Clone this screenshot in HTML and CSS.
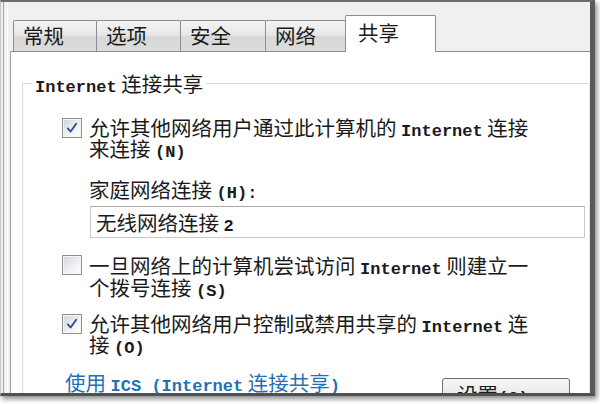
FILE: index.html
```html
<!DOCTYPE html>
<html lang="zh-CN">
<head>
<meta charset="utf-8">
<title>属性 - 共享</title>
<link rel="stylesheet" href="styles.css">
</head>
<body>
<div class="window">
  <div class="tabs">
    <div class="tab tab-general">常规</div>
    <div class="tab tab-options">选项</div>
    <div class="tab tab-security">安全</div>
    <div class="tab tab-network">网络</div>
    <div class="tab tab-share tab-active">共享</div>
  </div>
  <div class="panel">
    <fieldset class="group">
      <legend class="group-title"><span class="en">Internet</span> 连接共享</legend>
      <div class="group-body">
        <div class="option opt-allow">
          <span class="check checked"><svg viewBox="0 0 20 20" width="14" height="14"><path d="M4 10.5 L8 15 L16 4" fill="none" stroke="#34488c" stroke-width="2.6" stroke-linecap="round" stroke-linejoin="round"/></svg></span>
          <div class="option-text">允许其他网络用户通过此计算机的 <span class="en">Internet</span> 连接<br>来连接 <span class="en">(N)</span></div>
        </div>
        <div class="field-label">家庭网络连接 <span class="en">(H):</span></div>
        <div class="select">无线网络连接 <span class="en">2</span></div>
        <div class="option opt-dial">
          <span class="check"></span>
          <div class="option-text">一旦网络上的计算机尝试访问 <span class="en">Internet</span> 则建立一<br>个拨号连接 <span class="en">(S)</span></div>
        </div>
        <div class="option opt-control">
          <span class="check checked"><svg viewBox="0 0 20 20" width="14" height="14"><path d="M4 10.5 L8 15 L16 4" fill="none" stroke="#34488c" stroke-width="2.6" stroke-linecap="round" stroke-linejoin="round"/></svg></span>
          <div class="option-text">允许其他网络用户控制或禁用共享的 <span class="en">Internet</span> 连<br>接 <span class="en">(O)</span></div>
        </div>
        <div class="footer">
          <a class="ics-link" href="#">使用 <span class="en">ICS (Internet</span> 连接共享<span class="en">)</span></a>
          <button class="btn" type="button">设置<span class="en">(G)</span></button>
        </div>
      </div>
    </fieldset>
  </div>
</div>
</body>
</html>
```

FILE: styles.css
```css
html, body {
  margin: 0;
  padding: 0;
  background: #ffffff;
}

body {
  width: 600px;
  height: 404px;
  overflow: hidden;
  font-family: "Noto Sans CJK SC", "Noto Sans", sans-serif;
  font-size: 20.5px;
  color: #1a1a1a;
}

/* half-width latin runs; zero line-height keeps them from stretching the line */
.en {
  font-family: "Liberation Mono", "DejaVu Sans Mono", monospace;
  font-size: 17px;
  font-weight: 700;
  line-height: 0;
}

/* dialog frame */
.window {
  box-sizing: border-box;
  width: 595px;
  height: 396px;
  display: flex;
  flex-direction: column;
  background: #f0f0f0;
  border-top: 2px solid #6c6c6c;
  border-left: 1px solid #c4c4c4;
  border-right: 5px solid #5a5a5a;
  border-bottom: 3px solid #505050;
  padding: 13px 0 0 9px;
  overflow: hidden;
  box-shadow:
    inset 2px 0 0 #f0f0f0,
    inset 3px 0 0 #a4a4a4,
    inset 6px 0 0 #f0f0f0,
    inset 7px 0 0 #fdfdfd,
    2px 3px 5px rgba(0, 0, 0, 0.45);
}

/* tab strip */
.tabs {
  display: flex;
  align-items: flex-end;
  margin-left: 3px;
  flex: none;
}

.tab {
  box-sizing: border-box;
  height: 31px;
  line-height: 28px;
  padding-left: 9px;
  border: 1px solid #8a8d94;
  border-bottom: none;
  border-radius: 2px 2px 0 0;
  background: linear-gradient(#f4f4f4, #e6e6e6 48%, #d8d8d8 52%, #dcdcdc);
  color: #1a1a1a;
  margin-left: -1px;
}

.tab-general { width: 84px; margin-left: 0; }
.tab-options { width: 85px; }
.tab-security { width: 86px; }
.tab-network { width: 81px; }

.tab-share { width: 91px; }

.tab-active {
  position: relative;
  z-index: 1;
  height: 37px;
  line-height: 32px;
  padding-left: 12px;
  margin-bottom: -1px;
  background: #ffffff;
}

/* page body */
.panel {
  flex: 1;
  background: #ffffff;
  border-top: 1px solid #8a8d94;
  border-left: 1px solid #a0a0a0;
}

.group {
  margin: 19px 0 0 11px;
  padding: 0 0 40px 0;
  border: 1px solid #d6dbe0;
  border-right-color: #e6e6e6;
  min-width: 0;
}

.group-title {
  margin-left: 9px;
  padding: 0 3px;
  line-height: 24px;
  color: #1a1a1a;
}

.group-body {
  padding-left: 39px;
}

.option {
  display: flex;
  align-items: flex-start;
  line-height: 21px;
}

.opt-allow { margin-top: 22px; }
.opt-dial { margin-top: 16px; line-height: 22px; }
.opt-control { margin-top: 15px; }

.check {
  box-sizing: border-box;
  flex: none;
  width: 20px;
  height: 20px;
  margin-top: 1px;
  margin-right: 7px;
  border: 1px solid #8e8f8f;
  background: linear-gradient(135deg, #cfd3da 0%, #eef0f3 55%, #ffffff 100%);
  box-shadow: inset 0 0 0 1px #f7f7f7;
  display: flex;
  align-items: center;
  justify-content: center;
}

.field-label {
  margin-top: 19px;
  padding-left: 27px;
  line-height: 22px;
}

.select {
  box-sizing: border-box;
  width: 495px;
  height: 32px;
  margin: 6px 0 0 28px;
  padding-left: 5px;
  line-height: 30px;
  border: 1px solid #c9c9c9;
  border-top-color: #a9a9a9;
  background: #ffffff;
}

.footer {
  display: flex;
  align-items: flex-start;
  margin-top: 16px;
  line-height: 22px;
}

.ics-link {
  margin-left: 3px;
  color: #1f70b8;
  text-decoration: underline;
  text-underline-offset: 2px;
}

.btn {
  box-sizing: border-box;
  width: 128px;
  height: 30px;
  margin: 7px 19px 0 auto;
  padding: 0 0 0 14px;
  text-align: left;
  font: inherit;
  line-height: 30px;
  color: #1a1a1a;
  border: 1px solid #707070;
  border-radius: 3px;
  background: linear-gradient(#f6f6f6, #ebebeb 50%, #dddddd 51%, #cfcfcf);
}
```
